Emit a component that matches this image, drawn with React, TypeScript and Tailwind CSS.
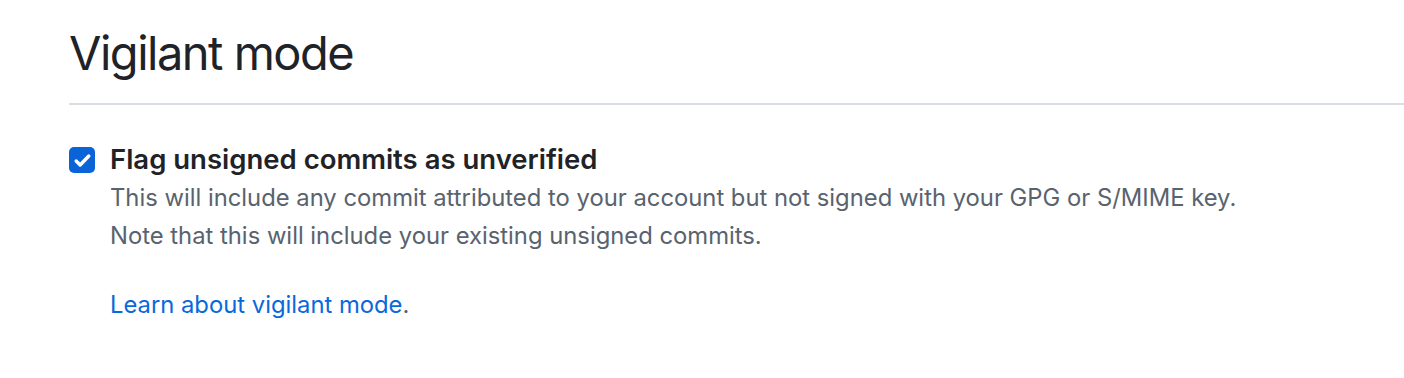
export default function App() {
  return (
    <div className="min-h-screen bg-white pl-[69px] pt-[23px] font-['Inter',sans-serif] text-[#1f2328]">
      <h2 className="border-b-2 border-[#d8dee4] pb-[20px] text-[47px] font-normal leading-[60px] tracking-[-1.5px]">
        Vigilant mode
      </h2>

      <div className="mt-[39px] flex items-start gap-[15px]">
        <div className="mt-[3px] flex h-[26px] w-[26px] shrink-0 items-center justify-center rounded-[5px] bg-[#0b63d8]">
          <svg width="21" height="21" viewBox="0 0 16 16" fill="none">
            <path
              d="M3.2 8.4l3 3L12.8 4.6"
              stroke="white"
              strokeWidth="2.6"
              strokeLinecap="round"
              strokeLinejoin="round"
            />
          </svg>
        </div>
        <div>
          <label className="block text-[27.5px] font-semibold leading-[31px]">
            Flag unsigned commits as unverified
          </label>
          <p className="mt-[4px] text-[23.8px] leading-[38px] text-[#59636e]">
            This will include any commit attributed to your account but not signed with your GPG or S/MIME key.
            <br />
            Note that this will include your existing unsigned commits.
          </p>
          <p className="mt-[31px] text-[23.8px] leading-[38px] text-[#59636e]">
            <a href="#" className="text-[#0969da]">
              Learn about vigilant mode
            </a>
            .
          </p>
        </div>
      </div>
    </div>
  );
}
